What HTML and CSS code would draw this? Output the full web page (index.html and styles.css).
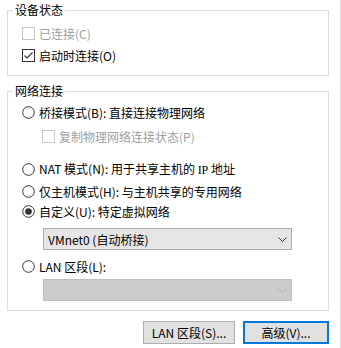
FILE: index.html
```html
<!DOCTYPE html>
<html>
<head>
<meta charset="utf-8">
<link rel="stylesheet" href="styles.css">
</head>
<body>
<div class="page">
  <fieldset class="group g1">
    <legend>设备状态</legend>
    <div class="body b1">
      <div class="opt disabled first">
        <svg class="ico" width="13" height="13" viewBox="0 0 13 13"><rect x="0.5" y="0.5" width="12" height="12" fill="#fff" stroke="#c6c6c6"/></svg>
        <span>已连接(C)</span>
      </div>
      <div class="opt second">
        <svg class="ico" width="13" height="13" viewBox="0 0 13 13"><rect x="0.5" y="0.5" width="12" height="12" fill="#fff" stroke="#333"/><path d="M2.5 6.5 L5 9 L10.5 3.5" stroke="#333" stroke-width="1.1" fill="none"/></svg>
        <span>启动时连接(O)</span>
      </div>
    </div>
  </fieldset>

  <fieldset class="group g2">
    <legend>网络连接</legend>
    <div class="body b2">
      <div class="opt bridge">
        <svg class="ico" width="13" height="13" viewBox="0 0 13 13"><circle cx="6.5" cy="6.5" r="5.8" fill="#fff" stroke="#333"/></svg>
        <span>桥接模式(B): 直接连接物理网络</span>
      </div>
      <div class="opt disabled sub">
        <svg class="ico" width="13" height="13" viewBox="0 0 13 13"><rect x="0.5" y="0.5" width="12" height="12" fill="#fff" stroke="#c6c6c6"/></svg>
        <span>复制物理网络连接状态(P)</span>
      </div>
      <div class="opt nat">
        <svg class="ico" width="13" height="13" viewBox="0 0 13 13"><circle cx="6.5" cy="6.5" r="5.8" fill="#fff" stroke="#333"/></svg>
        <span>NAT 模式(N): 用于共享主机的 <span class="ip">IP</span> 地址</span>
      </div>
      <div class="opt host">
        <svg class="ico" width="13" height="13" viewBox="0 0 13 13"><circle cx="6.5" cy="6.5" r="5.8" fill="#fff" stroke="#333"/></svg>
        <span>仅主机模式(H): 与主机共享的专用网络</span>
      </div>
      <div class="opt custom">
        <svg class="ico" width="13" height="13" viewBox="0 0 13 13"><circle cx="6.5" cy="6.5" r="5.8" fill="#fff" stroke="#333"/><circle cx="6.5" cy="6.5" r="3.3" fill="#333"/></svg>
        <span>自定义(U): 特定虚拟网络</span>
      </div>
      <div class="select vm">
        <span>VMnet0 (自动桥接)</span>
        <svg class="chev" width="9" height="5" viewBox="0 0 9 5"><path d="M0.5 0.5 L4.5 4.5 L8.5 0.5" stroke="#333" fill="none"/></svg>
      </div>
      <div class="opt lan">
        <svg class="ico" width="13" height="13" viewBox="0 0 13 13"><circle cx="6.5" cy="6.5" r="5.8" fill="#fff" stroke="#333"/></svg>
        <span>LAN 区段(L):</span>
      </div>
      <div class="select off">
        <span></span>
        <svg class="chev" width="9" height="5" viewBox="0 0 9 5"><path d="M0.5 0.5 L4.5 4.5 L8.5 0.5" stroke="#b0b0b0" fill="none"/></svg>
      </div>
    </div>
  </fieldset>

  <div class="buttons">
    <div class="btn lanbtn">LAN 区段(S)...</div>
    <div class="btn adv">高级(V)...</div>
  </div>
</div>
</body>
</html>
```

FILE: styles.css
```css
html, body {
  margin: 0;
  padding: 0;
  background: #fff;
}
body {
  font-family: "Noto Sans CJK SC", "Noto Sans", sans-serif;
  font-size: 12px;
  color: #000;
}
.page {
  width: 341px;
  height: 348px;
  box-sizing: border-box;
  border-right: 1px solid #dcdcdc;
  padding-left: 7px;
  overflow: hidden;
}
.group {
  margin: 0;
  padding: 0;
  width: 322px;
  box-sizing: border-box;
  border: 1px solid #dcdcdc;
}
.group legend {
  margin-left: 5px;
  padding: 0 2px;
  height: 20px;
  line-height: 20px;
}
.g2 {
  margin-top: 5px;
}
.body {
  padding-left: 14px;
  display: flex;
  flex-direction: column;
  align-items: flex-start;
}
.b1 {
  padding-top: 3px;
  padding-bottom: 10px;
}
.b2 {
  padding-top: 1px;
  padding-bottom: 9px;
}
.opt {
  height: 20px;
  display: flex;
  align-items: center;
  white-space: nowrap;
}
.opt .ico {
  flex: none;
  margin-right: 4px;
}
.opt.disabled {
  color: #a0a0a0;
}
.second { margin-top: 2px; }
.sub { margin-left: 20px; margin-top: 4px; }
.nat { margin-top: 13px; }
.host { margin-top: 2px; }
.custom { margin-top: 0; }
.lan { margin-top: 6px; }
.ip {
  font-family: "Liberation Serif", serif;
}
.select {
  margin-left: 21px;
  width: 249px;
  height: 22px;
  box-sizing: border-box;
  border: 1px solid #adadad;
  background: #e5e5e5;
  display: flex;
  align-items: center;
  justify-content: space-between;
  padding: 0 4px 0 4px;
}
.select.vm {
  margin-top: 7px;
}
.select.off {
  margin-top: 3px;
  background: #cccccc;
  border-color: #bfbfbf;
}
.chev {
  flex: none;
}
.buttons {
  display: flex;
  justify-content: flex-end;
  gap: 8px;
  width: 322px;
  margin-top: 10px;
}
.btn {
  height: 23px;
  box-sizing: border-box;
  border: 1px solid #adadad;
  background: #e1e1e1;
  display: flex;
  align-items: center;
  justify-content: center;
}
.lanbtn { width: 92px; }
.adv {
  width: 86px;
  border: 2px solid #0078d7;
}
```
